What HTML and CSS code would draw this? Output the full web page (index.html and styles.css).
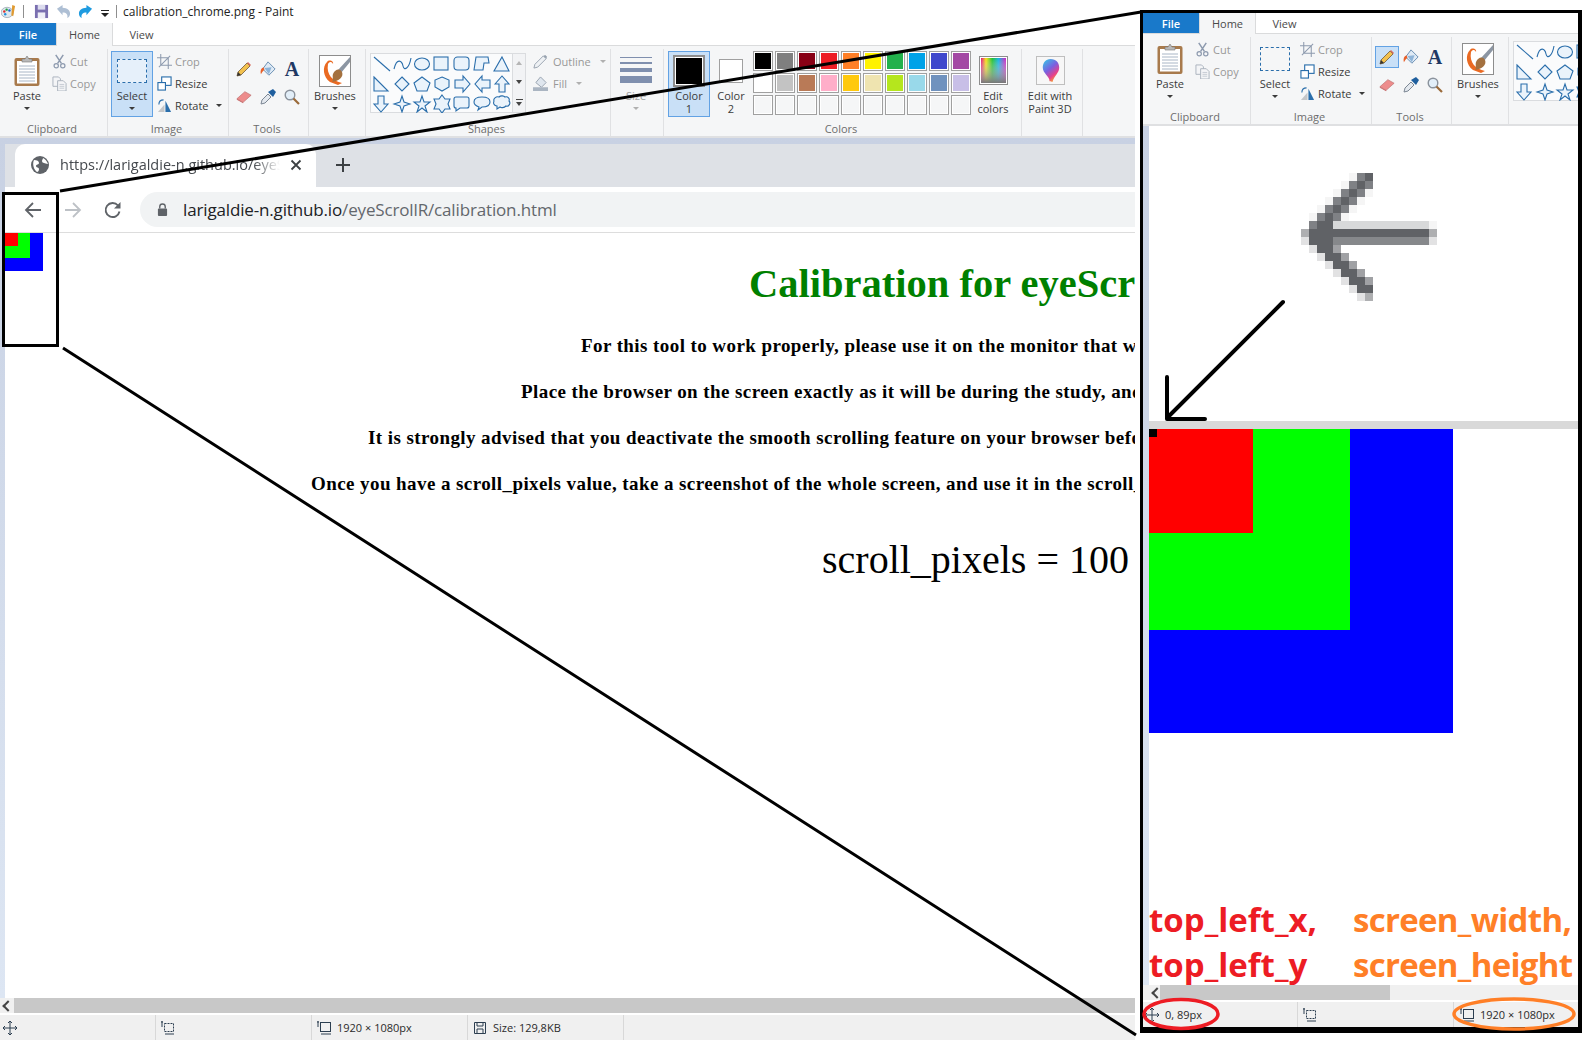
FILE: index.html
```html
<!DOCTYPE html>
<html lang="en">
<head>
    <meta charset="UTF-8">
    <title>calibration_chrome.png - Paint</title>
    <link rel="stylesheet" href="styles.css">
</head>
<body>
    <!-- shared icons -->
    <svg class="sprite" width="0" height="0">
        <defs>
            <linearGradient id="rainbow" x1="0" x2="1" y1="0" y2="0">
                <stop offset="0" stop-color="#e0107a"/><stop offset="0.2" stop-color="#f6e012"/><stop offset="0.45" stop-color="#20c030"/><stop offset="0.7" stop-color="#10b0e0"/><stop offset="1" stop-color="#d020c0"/>
            </linearGradient>
            <linearGradient id="fadeGray" x1="0" x2="0" y1="0" y2="1">
                <stop offset="0" stop-color="#fff" stop-opacity="0"/><stop offset="1" stop-color="#777"/>
            </linearGradient>
            <linearGradient id="balloon" x1="0" x2="0.6" y1="0" y2="1">
                <stop offset="0" stop-color="#2fd0e8"/><stop offset="0.5" stop-color="#7a60e0"/><stop offset="0.8" stop-color="#e8408a"/><stop offset="1" stop-color="#f8a030"/>
            </linearGradient>
        </defs>
        <symbol id="i-paste" viewBox="0 0 26 30">
            <rect x="0.5" y="2" width="25" height="28" rx="2" fill="#a87a4c"/>
            <rect x="3" y="5" width="20" height="22.500" fill="#fff"/>
            <path d="M5 10h16M5 13h16M5 16h16M5 19h16M5 22h16M5 25h16" stroke="#a9b6c6"/>
            <path d="M8 6V3h3l2-3 2 3h3v3z" fill="#b9b9b9" stroke="#777" stroke-width="0.6"/>
        </symbol>
        <symbol id="i-cut" viewBox="0 0 14 16">
            <path d="M3 1l6 9M11 1L5 10" stroke="#8d9aae" stroke-width="1.600" fill="none"/>
            <circle cx="3.500" cy="12.500" r="2.300" fill="none" stroke="#8d9aae" stroke-width="1.300"/>
            <circle cx="10.500" cy="12.500" r="2.300" fill="none" stroke="#8d9aae" stroke-width="1.300"/>
        </symbol>
        <symbol id="i-copy" viewBox="0 0 16 16">
            <path d="M1 1h6l2 2v8H1z" fill="#f4f5f7" stroke="#aab2bd"/>
            <path d="M6 5h6l3 3v8H6z" fill="#f4f5f7" stroke="#aab2bd"/>
            <path d="M8 9h5M8 11h5M8 13h5" stroke="#c3cad2"/>
        </symbol>
        <symbol id="i-crop" viewBox="0 0 16 16">
            <path d="M4 0v12h12M0 4h12v12M2 14L14 2" fill="none" stroke="#8d9aae" stroke-width="1.100"/>
        </symbol>
        <symbol id="i-resize" viewBox="0 0 16 16">
            <rect x="5" y="1" width="10" height="9" fill="#fff" stroke="#2a6eab" stroke-width="1.200"/>
            <rect x="1" y="7" width="8" height="8" fill="#fff" stroke="#2a6eab" stroke-width="1.200"/>
        </symbol>
        <symbol id="i-rotate" viewBox="0 0 16 16">
            <path d="M1 15L8 7v8z" fill="#c4c6c9"/>
            <path d="M9 3l6 12H9z" fill="#2a6eab"/>
            <path d="M2 7C2 4 4 2 7 2" fill="none" stroke="#2a6eab" stroke-width="1.200"/>
        </symbol>
        <symbol id="i-pencil" viewBox="0 0 16 16">
            <path d="M1 15l1-4 9-9 3 3-9 9z" fill="#f2c14e" stroke="#70583a" stroke-width="0.800"/>
            <path d="M1 15l1-4 3 3z" fill="#333"/>
            <path d="M11 2l3 3 1-1-3-3z" fill="#d86a5a"/>
        </symbol>
        <symbol id="i-fill" viewBox="0 0 18 18">
            <path d="M9 1l8 8-7 7-7-7z" fill="#dfeaf5" stroke="#5c85ad"/>
            <path d="M5 8l8-1-3 8z" fill="#8eb4d8"/>
            <path d="M4 7C1 8 0 11 1 15c1-2 2-4 4-5z" fill="#e8602a"/>
        </symbol>
        <symbol id="i-eraser" viewBox="0 0 18 16">
            <path d="M1 10l9-8 7 4-9 8z" fill="#ed8c8c" stroke="#b86a6a" stroke-width="0.700"/>
            <path d="M1 10l7 4v1l-7-4z" fill="#c96a6a"/>
        </symbol>
        <symbol id="i-picker" viewBox="0 0 16 16">
            <path d="M1 15l1-4 6-6 3 3-6 6z" fill="#e3e8ee" stroke="#7c8794"/>
            <path d="M8 3l5-3 3 3-3 5z" fill="#1f5f9e"/>
        </symbol>
        <symbol id="i-zoom" viewBox="0 0 16 16">
            <circle cx="6" cy="6" r="4.800" fill="#e2eef8" stroke="#8a929c" stroke-width="1.400"/>
            <path d="M9.500 9.500L15 15" stroke="#9a6a3a" stroke-width="2.200"/>
        </symbol>
        <symbol id="i-brushes" viewBox="0 0 32 32">
            <rect x="0.500" y="0.500" width="31" height="31" fill="#fff" stroke="#8d8d8d"/>
            <path d="M31 2L19 15l3 3 9-11z" fill="#8c96a3"/>
            <path d="M8 7C3 12 4 22 11 27l8 3 4-2C14 26 7 20 9 9c2-3 4-2 5 0 1-3-4-5-6-2z" fill="#ea6a22"/>
            <path d="M14 19c2-5 7-6 9-2 2 5-3 9-10 10 2-2 0-5 1-8z" fill="#a4713f"/>
        </symbol>
        <symbol id="i-outline" viewBox="0 0 16 16">
            <path d="M1 15l1-4 9-9 3 3-9 9z" fill="#eef1f4" stroke="#96a1ae"/>
            <path d="M11 2l3 3 1-2-2-2z" fill="#96a1ae"/>
        </symbol>
        <symbol id="i-fillshape" viewBox="0 0 16 16">
            <path d="M8 1l6 6-5 5-6-5z" fill="#dfe6ee" stroke="#96a1ae"/>
            <rect x="0" y="12" width="16" height="4" fill="#aab5c2"/>
        </symbol>
        <symbol id="i-shapes" viewBox="0 0 142 59">
            <g fill="#eaf3fb" stroke="#2a6eab" stroke-width="1.100">
                <path d="M3 3l16 14" fill="none"/>
                <path d="M23 15c3-12 8-8 9-3s6 3 8-8" fill="none"/>
                <ellipse cx="51" cy="10" rx="7.500" ry="6"/>
                <rect x="63" y="3" width="14" height="13"/>
                <rect x="83" y="3" width="15" height="13" rx="3.500"/>
                <path d="M103 16l2-13h12l1 6h-5l-1 7z"/>
                <path d="M131 3l7 14h-15z"/>
                <path d="M3 23l14 14H3z"/>
                <path d="M31 23l7 7-7 7-7-7z"/>
                <path d="M51 23l8 6-3 8H46l-3-8z"/>
                <path d="M71 23l7 3v7l-7 4-7-4v-7z"/>
                <path d="M84 26h8v-4l7 8-7 8v-4h-8z"/>
                <path d="M119 26h-8v-4l-7 8 7 8v-4h8z"/>
                <path d="M124 30l7-8 7 8h-4v8h-6v-8z"/>
                <path d="M7 42h6v8h4l-7 8-7-8h4z"/>
                <path d="M31 42l2 6 6 2-6 2-2 6-2-6-6-2 6-2z"/>
                <path d="M51 42l2 6h6l-5 4 2 6-5-4-5 4 2-6-5-4h6z"/>
                <path d="M71 41l3 4h5l-2 5 2 5h-5l-3 4-3-4h-5l2-5-2-5h5z"/>
                <path d="M85 43h11a2 2 0 012 2v7a2 2 0 01-2 2h-7l-4 3v-3a2 2 0 01-2-2v-7a2 2 0 012-2z"/>
                <path d="M111 43c5 0 8 2 8 5s-3 5-8 5l-4 3 1-3c-3-1-5-3-5-5 0-3 3-5 8-5z"/>
                <path d="M128 43c2-2 5-1 6 0 3-1 5 2 4 4 2 2 0 6-3 5-2 2-5 2-6 1l-3 2v-3c-3 0-4-3-3-5-1-2 2-5 5-4z"/>
            </g>
        </symbol>
        <symbol id="i-rainbow" viewBox="0 0 29 29">
            <rect x="0.500" y="0.500" width="28" height="28" fill="#fff" stroke="#8d8d8d"/>
            <rect x="2" y="2" width="25" height="25" fill="url(#rainbow)"/>
            <rect x="2" y="2" width="25" height="25" fill="url(#fadeGray)"/>
        </symbol>
        <symbol id="i-paint3d" viewBox="0 0 30 30">
            <rect x="0.500" y="0.500" width="29" height="29" fill="#f7f7f7" stroke="#bdbdbd"/>
            <path d="M15 3c6 0 9 4 9 9 0 6-5 8-7 15l-2-1-1 0c0-5-7-8-7-14 0-5 3-9 8-9z" fill="url(#balloon)"/>
        </symbol>
        <symbol id="i-move" viewBox="0 0 14 14">
            <path d="M7 0v14M0 7h14M5 2l2-2 2 2M5 12l2 2 2-2M2 5L0 7l2 2M12 5l2 2-2 2" fill="none" stroke="#2c3e50"/>
        </symbol>
        <symbol id="i-selbox" viewBox="0 0 14 14">
            <rect x="3.500" y="2.500" width="9" height="8" fill="none" stroke="#2c3e50" stroke-dasharray="2 1"/>
            <path d="M1 6V0M0 1h2M4 13h9" fill="none" stroke="#2c3e50"/>
        </symbol>
        <symbol id="i-canvas" viewBox="0 0 14 14">
            <rect x="3.500" y="1.500" width="10" height="9" fill="none" stroke="#2c3e50"/>
            <path d="M1 6V0M0 1h2M4 13h10" fill="none" stroke="#2c3e50"/>
        </symbol>
        <symbol id="i-disk" viewBox="0 0 14 14">
            <path d="M1.500 1.500h11v11h-11z" fill="none" stroke="#2c3e50"/>
            <path d="M4 2v3h6V2M4 12V8h6v4" fill="none" stroke="#2c3e50"/>
        </symbol>
    </svg>

    <div class="paint-window">
        <div class="titlebar">
            <svg class="qa-icon app-icon" viewBox="0 0 16 16">
                <ellipse cx="6.500" cy="9" rx="6.500" ry="5.500" fill="#dfe8ef" stroke="#7a8a99" stroke-width="0.600"/>
                <circle cx="3.500" cy="8" r="1.300" fill="#e03030"/><circle cx="6" cy="6" r="1.300" fill="#20a040"/><circle cx="9" cy="7" r="1.300" fill="#2060d0"/><circle cx="4.500" cy="11" r="1.300" fill="#2090e0"/>
                <path d="M12 1l3 1-2 11-2-1z" fill="#e09a30"/>
            </svg>
            <span class="qa-sep"></span>
            <svg class="qa-icon save-icon" viewBox="0 0 16 16">
                <path d="M1 1h14v14H1z" fill="#7a6fb0"/><rect x="4" y="1" width="8" height="5" fill="#dcdcee"/><rect x="4" y="9" width="8" height="6" fill="#efeff7"/>
            </svg>
            <svg class="qa-icon undo-icon" viewBox="0 0 16 16">
                <path d="M1 5l6-4v3c5 0 8 3 8 6 0 2-1 4-3 5 1-4-1-6-5-6v3z" fill="#aebfd4"/>
            </svg>
            <svg class="qa-icon redo-icon" viewBox="0 0 16 16">
                <path d="M15 5L9 1v3C4 4 1 7 1 10c0 2 1 4 3 5-1-4 1-6 5-6v3z" fill="#1e9be0"/>
            </svg>
            <span class="qa-more"></span>
            <span class="qa-sep"></span>
            <span class="title-text">calibration_chrome.png - Paint</span>
        </div>

        <div class="tabs">
            <span class="tab tab-file">File</span>
            <span class="tab tab-home">Home</span>
            <span class="tab">View</span>
        </div>

        <div class="ribbon">
            <div class="group g-clipboard">
                <div class="group-body">
                    <div class="big-btn btn-paste">
                        <div class="big-icon"><svg class="icon-paste"><use href="#i-paste"/></svg></div>
                        <span>Paste</span><i class="caret"></i>
                    </div>
                    <div class="small-list clip-list">
                        <div class="small-item off"><svg><use href="#i-cut"/></svg>Cut</div>
                        <div class="small-item off"><svg><use href="#i-copy"/></svg>Copy</div>
                    </div>
                </div>
                <div class="group-label">Clipboard</div>
            </div>
            <div class="group g-image">
                <div class="group-body">
                    <div class="big-btn btn-select active">
                        <div class="big-icon"><span class="select-box"></span></div>
                        <span>Select</span><i class="caret"></i>
                    </div>
                    <div class="small-list">
                        <div class="small-item off"><svg><use href="#i-crop"/></svg>Crop</div>
                        <div class="small-item"><svg><use href="#i-resize"/></svg>Resize</div>
                        <div class="small-item"><svg><use href="#i-rotate"/></svg>Rotate<i class="caret caret-inline"></i></div>
                    </div>
                </div>
                <div class="group-label">Image</div>
            </div>
            <div class="group g-tools">
                <div class="group-body">
                    <div class="tools-grid">
                        <span class="tool"><svg><use href="#i-pencil"/></svg></span>
                        <span class="tool"><svg><use href="#i-fill"/></svg></span>
                        <span class="tool tool-text">A</span>
                        <span class="tool"><svg><use href="#i-eraser"/></svg></span>
                        <span class="tool"><svg><use href="#i-picker"/></svg></span>
                        <span class="tool"><svg><use href="#i-zoom"/></svg></span>
                    </div>
                </div>
                <div class="group-label">Tools</div>
            </div>
            <div class="group g-brushes">
                <div class="group-body">
                    <div class="big-btn btn-brushes">
                        <div class="big-icon"><svg class="icon-32"><use href="#i-brushes"/></svg></div>
                        <span>Brushes</span><i class="caret"></i>
                    </div>
                </div>
                <div class="group-label">&nbsp;</div>
            </div>
            <div class="group g-shapes">
                <div class="group-body">
                    <div class="gallery"><svg class="gallery-art"><use href="#i-shapes"/></svg></div>
                    <div class="gallery-scroll"><i class="scroll-up"></i><i class="scroll-down"></i><i class="scroll-more"></i></div>
                    <div class="small-list shape-list">
                        <div class="small-item off"><svg><use href="#i-outline"/></svg>Outline<i class="caret caret-inline"></i></div>
                        <div class="small-item off"><svg><use href="#i-fillshape"/></svg>Fill<i class="caret caret-inline"></i></div>
                    </div>
                </div>
                <div class="group-label">Shapes</div>
            </div>
            <div class="group g-size">
                <div class="group-body">
                    <div class="big-btn btn-size off">
                        <div class="big-icon size-lines"><i class="w1"></i><i class="w2"></i><i class="w3"></i><i class="w4"></i></div>
                        <span>Size</span><i class="caret"></i>
                    </div>
                </div>
                <div class="group-label">&nbsp;</div>
            </div>
            <div class="group g-colors">
                <div class="group-body">
                    <div class="big-btn btn-color active">
                        <div class="big-icon"><span class="color-box box-one"></span></div>
                        <span class="two-line">Color<br>1</span>
                    </div>
                    <div class="big-btn btn-color">
                        <div class="big-icon"><span class="color-box box-two"></span></div>
                        <span class="two-line">Color<br>2</span>
                    </div>
                    <div class="palette">
                        <i class="c1"></i><i class="c2"></i><i class="c3"></i><i class="c4"></i><i class="c5"></i><i class="c6"></i><i class="c7"></i><i class="c8"></i><i class="c9"></i><i class="c10"></i>
                        <i class="c11"></i><i class="c12"></i><i class="c13"></i><i class="c14"></i><i class="c15"></i><i class="c16"></i><i class="c17"></i><i class="c18"></i><i class="c19"></i><i class="c20"></i>
                        <i></i><i></i><i></i><i></i><i></i><i></i><i></i><i></i><i></i><i></i>
                    </div>
                    <div class="big-btn btn-edit">
                        <div class="big-icon"><svg class="icon-29"><use href="#i-rainbow"/></svg></div>
                        <span class="two-line">Edit<br>colors</span>
                    </div>
                </div>
                <div class="group-label">Colors</div>
            </div>
            <div class="group g-3d">
                <div class="group-body">
                    <div class="big-btn btn-3d">
                        <div class="big-icon"><svg class="icon-29"><use href="#i-paint3d"/></svg></div>
                        <span class="two-line">Edit with<br>Paint 3D</span>
                    </div>
                </div>
                <div class="group-label">&nbsp;</div>
            </div>
        </div>

        <div class="canvas-area">
            <div class="chrome-tabs">
                <div class="chrome-tab">
                    <svg class="globe" viewBox="0 0 18 18">
                        <circle cx="9" cy="9" r="9" fill="#5f6368"/>
                        <path d="M3 4c3 0 5 1 5 3s-3 1-3 3 3 1 3 3-1 3-2 3C3 14 1 8 3 4zM12 2c2 1 4 3 5 6-2 0-3-1-4-1s-2-1-2-2 1-2 1-3z" fill="#fff"/>
                    </svg>
                    <span class="chrome-tab-title">https://larigaldie-n.github.io/eyeScrollR/calibration.html</span>
                    <svg class="tab-close" viewBox="0 0 12 12"><path d="M1.500 1.500l9 9M10.500 1.500l-9 9" stroke="#3c4043" stroke-width="1.800"/></svg>
                </div>
                <svg class="tab-plus" viewBox="0 0 14 14"><path d="M7 0v14M0 7h14" stroke="#3c4043" stroke-width="2"/></svg>
            </div>
            <div class="chrome-toolbar">
                <svg class="nav-icon" viewBox="0 0 18 18"><path d="M17 9H2M9 2L2 9l7 7" fill="none" stroke="#5f6368" stroke-width="1.800"/></svg>
                <svg class="nav-icon" viewBox="0 0 18 18"><path d="M1 9h15M9 2l7 7-7 7" fill="none" stroke="#bdc1c6" stroke-width="1.800"/></svg>
                <svg class="nav-icon" viewBox="0 0 18 18"><path d="M15.500 10.500A7 7 0 1 1 14 4.500" fill="none" stroke="#5f6368" stroke-width="1.900"/><path d="M16.500 1v6.500H10z" fill="#5f6368"/></svg>
                <div class="url-pill">
                    <svg class="lock" viewBox="0 0 12 14"><path d="M3 6V4a3 3 0 016 0v2" fill="none" stroke="#5f6368" stroke-width="1.500"/><rect x="1" y="6" width="10" height="8" rx="1" fill="#5f6368"/></svg>
                    <span class="url"><b>larigaldie-n.github.io</b>/eyeScrollR/calibration.html</span>
                </div>
            </div>
            <div class="web-page">
                <div class="squares">
                    <div class="sq-blue"><div class="sq-green"><div class="sq-red"></div></div></div>
                </div>
                <h1 class="cal-title">Calibration for eyeScrollR</h1>
                <p class="cal-line line-a">For this tool to work properly, please use it on the monitor that will be used</p>
                <p class="cal-line line-b">Place the browser on the screen exactly as it will be during the study, and scroll</p>
                <p class="cal-line line-c">It is strongly advised that you deactivate the smooth scrolling feature on your browser before</p>
                <p class="cal-line line-d">Once you have a scroll_pixels value, take a screenshot of the whole screen, and use it in the scroll_</p>
                <p class="cal-value">scroll_pixels = 100</p>
            </div>
        </div>

        <div class="hscroll"><i class="hscroll-left"></i><span class="hscroll-thumb"></span></div>
        <div class="statusbar">
            <span class="status-cell cell-a"><svg><use href="#i-move"/></svg></span>
            <span class="status-cell cell-b"><svg><use href="#i-selbox"/></svg></span>
            <span class="status-cell cell-b"><svg><use href="#i-canvas"/></svg>1920 × 1080px</span>
            <span class="status-cell cell-b"><svg><use href="#i-disk"/></svg>Size: 129,8KB</span>
        </div>
    </div>

    <!-- zoomed copy on the right -->
    <div class="zoom-frame">
        <div class="tabs tabs-short">
            <span class="tab tab-file">File</span>
            <span class="tab tab-home">Home</span>
            <span class="tab">View</span>
        </div>
        <div class="ribbon">
            <div class="group g-clipboard">
                <div class="group-body">
                    <div class="big-btn btn-paste">
                        <div class="big-icon"><svg class="icon-paste"><use href="#i-paste"/></svg></div>
                        <span>Paste</span><i class="caret"></i>
                    </div>
                    <div class="small-list clip-list">
                        <div class="small-item off"><svg><use href="#i-cut"/></svg>Cut</div>
                        <div class="small-item off"><svg><use href="#i-copy"/></svg>Copy</div>
                    </div>
                </div>
                <div class="group-label">Clipboard</div>
            </div>
            <div class="group g-image">
                <div class="group-body">
                    <div class="big-btn btn-select">
                        <div class="big-icon"><span class="select-box"></span></div>
                        <span>Select</span><i class="caret"></i>
                    </div>
                    <div class="small-list">
                        <div class="small-item off"><svg><use href="#i-crop"/></svg>Crop</div>
                        <div class="small-item"><svg><use href="#i-resize"/></svg>Resize</div>
                        <div class="small-item"><svg><use href="#i-rotate"/></svg>Rotate<i class="caret caret-inline"></i></div>
                    </div>
                </div>
                <div class="group-label">Image</div>
            </div>
            <div class="group g-tools">
                <div class="group-body">
                    <div class="tools-grid">
                        <span class="tool tool-on"><svg><use href="#i-pencil"/></svg></span>
                        <span class="tool"><svg><use href="#i-fill"/></svg></span>
                        <span class="tool tool-text">A</span>
                        <span class="tool"><svg><use href="#i-eraser"/></svg></span>
                        <span class="tool"><svg><use href="#i-picker"/></svg></span>
                        <span class="tool"><svg><use href="#i-zoom"/></svg></span>
                    </div>
                </div>
                <div class="group-label">Tools</div>
            </div>
            <div class="group g-brushes">
                <div class="group-body">
                    <div class="big-btn btn-brushes">
                        <div class="big-icon"><svg class="icon-32"><use href="#i-brushes"/></svg></div>
                        <span>Brushes</span><i class="caret"></i>
                    </div>
                </div>
                <div class="group-label">&nbsp;</div>
            </div>
            <div class="group g-shapes">
                <div class="group-body">
                    <div class="gallery"><svg class="gallery-art"><use href="#i-shapes"/></svg></div>
                </div>
            </div>
        </div>
        <div class="zoom-canvas">
            <div class="zoom-toolbar">
                <!-- back arrow blown up pixel by pixel -->
                <svg class="pixel-arrow" viewBox="0 0 17 16" shape-rendering="crispEdges">
                    <path fill="#f5f5f5" d="M6 0h1v1H6zM5 1h1v1H5zM4 2h1v1H4zM8 2h1v1H8zM3 3h1v1H3zM7 3h1v1H7zM2 4h1v1H2zM6 4h1v1H6zM1 5h1v1H1zM5 5h1v1H5zM16 6h1v1h-1z"/>
                    <path fill="#7f8185" d="M7 0h1v1H7zM6 1h1v1H6zM8 1h1v1H8zM5 2h1v1H5zM7 2h1v1H7zM4 3h1v1H4zM6 3h1v1H6zM3 4h1v1H3zM5 4h1v1H5zM2 5h1v1H2zM4 5h1v1H4zM1 6h1v1H1z"/>
                    <path fill="#606266" d="M8 0h1v1H8zM7 1h1v1H7zM6 2h1v1H6zM5 3h1v1H5zM4 4h1v1H4zM3 5h1v1H3zM2 6h2v1H2zM1 7h15v1H1zM1 8h3v1H1zM2 9h2v1H2zM3 10h2v1H3zM4 11h2v1H4zM5 12h2v1H5zM6 13h2v1H6zM7 14h2v1H7z"/>
                    <path fill="#d8d9da" d="M4 6h12v1H4z"/>
                    <path fill="#aeafb1" d="M0 7h1v1H0zM16 7h1v1h-1zM8 15h1v1H8z"/>
                    <path fill="#86888b" d="M4 8h12v1H4z"/>
                    <path fill="#e2e2e3" d="M0 8h1v1H0zM16 8h1v1h-1zM1 9h1v1H1zM2 10h1v1H2zM3 11h1v1H3zM4 12h1v1H4zM5 13h1v1H5zM6 14h1v1H6zM7 15h1v1H7z"/>
                    <path fill="#a0a1a4" d="M4 9h1v1H4zM5 10h1v1H5zM6 11h1v1H6zM7 12h1v1H7zM8 13h1v1H8z"/>
                </svg>
            </div>
            <div class="zoom-strip"></div>
            <div class="zoom-page">
                <div class="sq-blue big"><div class="sq-green"><div class="sq-red"><span class="pixel-mark"></span></div></div></div>
                <div class="coord-labels">
                    <span class="lbl-red">top_left_x,</span><span class="lbl-orange">screen_width,</span>
                    <span class="lbl-red">top_left_y</span><span class="lbl-orange">screen_height</span>
                </div>
            </div>
        </div>
        <div class="hscroll zoom-scroll"><i class="hscroll-left"></i><span class="hscroll-thumb"></span></div>
        <div class="statusbar">
            <span class="status-cell cell-z1"><svg><use href="#i-move"/></svg>0, 89px</span>
            <span class="status-cell cell-z2"><svg><use href="#i-selbox"/></svg></span>
            <span class="status-cell cell-z3"><svg><use href="#i-canvas"/></svg>1920 × 1080px</span>
        </div>
    </div>

    <!-- callout lines and circled values drawn on top -->
    <div class="zoom-source"></div>
    <svg class="annotations" viewBox="0 0 1582 1040">
        <path d="M60 191L1141 12M63 348L1136 1035" stroke="#000" stroke-width="3" fill="none"/>
        <path d="M1283 302L1168 417M1167 377V419H1205" stroke="#000" stroke-width="4" fill="none" stroke-linecap="round" stroke-linejoin="round"/>
        <ellipse cx="1181" cy="1014" rx="37" ry="14.500" fill="none" stroke="#ed1c24" stroke-width="3.500"/>
        <ellipse cx="1514" cy="1014" rx="60" ry="15" fill="none" stroke="#ff7f27" stroke-width="3.500"/>
    </svg>
</body>
</html>
```

FILE: styles.css
```css
* {
    box-sizing: border-box;
}

body {
    margin: 0;
    width: 1582px;
    height: 1040px;
    overflow: hidden;
    position: relative;
    display: flex;
    align-items: flex-start;
    background-color: #ffffff;
    font-family: "Open Sans", "Noto Sans", sans-serif;
    font-size: 11px;
    color: #3b3b3b;
}

.sprite {
    position: absolute;
}

svg {
    display: block;
}

i {
    display: block;
}

/* window */

.paint-window {
    width: 1135px;
    height: 1040px;
    flex-shrink: 0;
    display: flex;
    flex-direction: column;
    overflow: hidden;
}

.titlebar {
    height: 23px;
    display: flex;
    align-items: center;
    padding-left: 1px;
    flex-shrink: 0;
}

.qa-icon {
    width: 15px;
    height: 15px;
    margin-right: 7px;
}

.qa-sep {
    width: 1px;
    height: 13px;
    background-color: #8f8f8f;
    margin-right: 10px;
}

.app-icon {
    margin-right: 7px;
}

.qa-more {
    width: 8px;
    height: 6px;
    margin: 2px 7px 0 1px;
    border-top: 1px solid #222;
    position: relative;
}

.qa-more::after {
    content: "";
    position: absolute;
    left: 0;
    top: 2px;
    border: 4px solid transparent;
    border-top: 4px solid #222;
    border-bottom: 0;
}

.title-text {
    font-size: 12px;
    margin-left: -4px;
    color: #222;
}

.tabs {
    height: 23px;
    display: flex;
    flex-shrink: 0;
    background-color: #ffffff;
    border-bottom: 1px solid #dadbdc;
}

.tabs-short {
    height: 21px;
}

.tab {
    width: 57px;
    display: flex;
    align-items: center;
    justify-content: center;
    font-size: 11px;
    color: #4a4a4a;
}

.tab-file {
    width: 56px;
    background-color: #1979ca;
    color: #ffffff;
    font-weight: 600;
}

.tab-home {
    background-color: #f5f6f7;
    border: 1px solid #dadbdc;
    border-bottom: 0;
    border-top: 0;
    margin-bottom: -1px;
}

/* ribbon */

.ribbon {
    height: 92px;
    display: flex;
    flex-shrink: 0;
    padding: 3px 0 0;
    background-color: #f5f6f7;
    border-bottom: 2px solid #dfe0e2;
    overflow: hidden;
}

.group {
    display: flex;
    flex-direction: column;
    flex-shrink: 0;
    border-right: 1px solid #e0e1e3;
}

.group-body {
    height: 72px;
    display: flex;
}

.group-label {
    padding-right: 3px;
    text-align: center;
    line-height: 15px;
    font-size: 11px;
    color: #6d6d6d;
}

.g-clipboard { width: 108px; }
.g-image { width: 121px; }
.g-tools { width: 80px; }
.g-brushes { width: 57px; }
.g-shapes { width: 245px; }
.g-size { width: 53px; }
.g-colors { width: 358px; }
.g-3d { width: 61px; }

.big-btn {
    height: 66px;
    margin-top: 2px;
    display: flex;
    flex-direction: column;
    align-items: center;
    border: 1px solid transparent;
    text-align: center;
    line-height: 13px;
    flex-shrink: 0;
}

.big-btn.active {
    background-color: #c9e0f7;
    border-color: #62a2e4;
}

.big-btn.off {
    color: #a0a0a0;
}

.big-icon {
    height: 37px;
    display: flex;
    align-items: center;
    justify-content: center;
    flex-shrink: 0;
}

.two-line {
    display: block;
}

.caret {
    width: 0;
    height: 0;
    margin-top: 5px;
    border: 3px solid transparent;
    border-top: 3px solid #3b3b3b;
    border-bottom: 0;
}

.caret-inline {
    margin: 0 0 0 4px;
}

.btn-paste {
    width: 50px;
    margin-left: 2px;
}

.icon-paste {
    width: 26px;
    height: 30px;
}

.icon-32 {
    width: 32px;
    height: 32px;
}

.icon-29 {
    width: 29px;
    height: 29px;
}

.btn-select {
    width: 42px;
    margin-left: 3px;
}

.select-box {
    width: 30px;
    height: 24px;
    background-color: #e6f0fa;
    border: 1px dashed #2a6eab;
}

.btn-select:not(.active) .select-box {
    background-color: transparent;
}

.small-list {
    display: flex;
    flex-direction: column;
    padding-top: 1px;
    margin-left: 4px;
}

.clip-list {
    margin-left: 0;
}

.small-item {
    height: 22px;
    display: flex;
    align-items: center;
    gap: 3px;
    white-space: nowrap;
}

.small-item svg {
    width: 15px;
    height: 15px;
}

.small-item.off {
    color: #989898;
}

.small-item.off .caret {
    border-top-color: #b0b0b0;
}

.tools-grid {
    display: grid;
    grid-template-columns: repeat(3, 24px);
    grid-auto-rows: 22px;
    row-gap: 6px;
    margin: 9px 0 0 3px;
}

.tool {
    display: flex;
    align-items: center;
    justify-content: center;
    border: 1px solid transparent;
}

.tool svg {
    width: 16px;
    height: 16px;
}

.tool-on {
    background-color: #c9e0f7;
    border-color: #62a2e4;
}

.tool-text {
    font-family: "Liberation Serif", serif;
    font-weight: bold;
    font-size: 20px;
    color: #1f3864;
}

.btn-brushes {
    width: 52px;
}

.gallery {
    width: 143px;
    height: 60px;
    margin: 4px 0 0 4px;
    background-color: #fafbfc;
    border: 1px solid #dadcdf;
    flex-shrink: 0;
}

.gallery-art {
    width: 142px;
    height: 59px;
}

.gallery-scroll {
    width: 13px;
    height: 60px;
    margin-top: 4px;
    display: flex;
    flex-direction: column;
    align-items: center;
    justify-content: space-around;
    background-color: #f2f3f5;
    border: 1px solid #dadcdf;
    border-left: 0;
}

.scroll-up {
    border: 3px solid transparent;
    border-bottom: 4px solid #b5b5b5;
    border-top: 0;
}

.scroll-down {
    border: 3px solid transparent;
    border-top: 4px solid #444;
    border-bottom: 0;
}

.scroll-more {
    width: 7px;
    height: 6px;
    border-top: 1px solid #444;
    position: relative;
}

.scroll-more::after {
    content: "";
    position: absolute;
    left: 0;
    top: 2px;
    border: 3.5px solid transparent;
    border-top: 4px solid #444;
    border-bottom: 0;
}

.shape-list {
    margin-left: 7px;
}

.shape-list .small-item {
    gap: 5px;
}

.btn-size {
    width: 50px;
}

.btn-size .caret {
    border-top-color: #b0b0b0;
}

.size-lines {
    width: 32px;
    flex-direction: column;
    justify-content: flex-start;
    gap: 4px;
    padding-top: 5px;
}

.size-lines i {
    width: 32px;
    background-color: #7f8fae;
}

.w1 { height: 1px; }
.w2 { height: 2px; }
.w3 { height: 4px; }
.w4 { height: 7px; }

.btn-color {
    width: 42px;
}

.btn-color.active {
    margin-left: 4px;
}

.color-box {
    display: block;
}

.box-one {
    width: 32px;
    height: 32px;
    background-color: #000000;
    border: 2px solid #8d8d8d;
    outline: 1px solid #ffffff;
    outline-offset: -3px;
}

.box-two {
    width: 24px;
    height: 24px;
    background-color: #ffffff;
    border: 1px solid #a0a0a0;
}

.palette {
    display: grid;
    grid-template-columns: repeat(10, 20px);
    grid-auto-rows: 20px;
    gap: 2px;
    margin: 2px 0 0 1px;
    flex-shrink: 0;
}

.palette i {
    border: 1px solid #a0a0a0;
    outline: 1px solid #ffffff;
    outline-offset: -2px;
    background-color: #f5f6f7;
}

.palette i[class] {
    background-color: var(--swatch);
}

.c1 { --swatch: #000000; }
.c2 { --swatch: #7f7f7f; }
.c3 { --swatch: #880015; }
.c4 { --swatch: #ed1c24; }
.c5 { --swatch: #ff7f27; }
.c6 { --swatch: #fff200; }
.c7 { --swatch: #22b14c; }
.c8 { --swatch: #00a2e8; }
.c9 { --swatch: #3f48cc; }
.c10 { --swatch: #a349a4; }
.c11 { --swatch: #ffffff; }
.c12 { --swatch: #c3c3c3; }
.c13 { --swatch: #b97a57; }
.c14 { --swatch: #ffaec9; }
.c15 { --swatch: #ffc90e; }
.c16 { --swatch: #efe4b0; }
.c17 { --swatch: #b5e61d; }
.c18 { --swatch: #99d9ea; }
.c19 { --swatch: #7092be; }
.c20 { --swatch: #c8bfe7; }

.btn-edit {
    width: 38px;
    margin-left: 3px;
}

.btn-3d {
    width: 56px;
    white-space: nowrap;
}

/* canvas with the browser inside */

.canvas-area {
    flex: 1;
    min-height: 0;
    padding-left: 5px;
    background: linear-gradient(#c8d1e3, #dde6f3);
    padding-top: 6px;
    display: flex;
    flex-direction: column;
    overflow: hidden;
}

.chrome-tabs {
    height: 43px;
    flex-shrink: 0;
    display: flex;
    align-items: flex-start;
    padding: 0 0 0 10px;
    background-color: #dee1e6;
}

.chrome-tab {
    width: 301px;
    height: 43px;
    display: flex;
    align-items: center;
    padding: 0 11px 2px 16px;
    background-color: #ffffff;
    border-radius: 10px 10px 0 0;
}

.globe {
    width: 18px;
    height: 18px;
    flex-shrink: 0;
}

.chrome-tab-title {
    width: 220px;
    margin-left: 11px;
    overflow: hidden;
    white-space: nowrap;
    font-size: 14.500px;
    color: #45494e;
    -webkit-mask-image: linear-gradient(90deg, #000 88%, transparent);
    mask-image: linear-gradient(90deg, #000 88%, transparent);
}

.tab-close {
    width: 12px;
    height: 12px;
    margin-left: 10px;
    flex-shrink: 0;
}

.tab-plus {
    width: 14px;
    height: 14px;
    margin: 14px 0 0 20px;
}

.chrome-toolbar {
    height: 46px;
    flex-shrink: 0;
    display: flex;
    align-items: center;
    padding-left: 19px;
    background-color: #ffffff;
    border-bottom: 1px solid #dddddd;
}

.nav-icon {
    width: 18px;
    height: 18px;
    margin-right: 22px;
    flex-shrink: 0;
}

.url-pill {
    height: 35px;
    flex: 1;
    margin-left: -4px;
    display: flex;
    align-items: center;
    padding-left: 17px;
    background-color: #f1f3f4;
    border-radius: 18px 0 0 18px;
}

.lock {
    width: 11px;
    height: 13px;
}

.url {
    margin-left: 15px;
    font-size: 17px;
    letter-spacing: -0.150px;
    color: #63676c;
    white-space: nowrap;
}

.url b {
    font-weight: 400;
    color: #202124;
}

.web-page {
    flex: 1;
    background-color: #ffffff;
    font-family: "Liberation Serif", serif;
    color: #000000;
    overflow: hidden;
}

.squares {
    height: 38px;
}

.sq-blue {
    width: 38px;
    height: 38px;
    background-color: #0000ff;
}

.sq-green {
    width: 66%;
    height: 66%;
    background-color: #00ff00;
}

.sq-red {
    width: 52%;
    height: 52%;
    background-color: #ff0000;
}

.sq-blue.big {
    width: 304px;
    height: 304px;
}

.cal-title {
    margin: -9px 0 0 744px;
    font-size: 40.500px;
    line-height: 44px;
    color: #008000;
    white-space: nowrap;
}

.cal-line {
    margin: 0;
    padding-top: 24px;
    font-weight: bold;
    font-size: 19px;
    letter-spacing: 0.420px;
    line-height: 22px;
    white-space: nowrap;
}

.line-a { margin: 29px 0 0 576px; padding-top: 0; }
.line-b { margin-left: 516px; }
.line-c { margin-left: 363px; }
.line-d { margin-left: 306px; }

.cal-value {
    margin: 42px 0 0 817px;
    font-size: 40px;
    line-height: 46px;
    white-space: nowrap;
}

/* bottom bars */

.hscroll {
    height: 15px;
    flex-shrink: 0;
    display: flex;
    background-color: #c8c8c8;
}

.hscroll-left {
    width: 14px;
    position: relative;
    background-color: #f0f0f0;
}

.hscroll-left::after {
    content: "";
    position: absolute;
    left: 4px;
    top: 4px;
    width: 6px;
    height: 6px;
    border-left: 2px solid #444;
    border-bottom: 2px solid #444;
    transform: rotate(45deg);
}

.statusbar {
    height: 25px;
    margin-top: 2px;
    flex-shrink: 0;
    display: flex;
    align-items: stretch;
    background-color: #f0f0f0;
    font-size: 11px;
    color: #2b2b2b;
}

.status-cell {
    display: flex;
    align-items: center;
    gap: 6px;
    white-space: nowrap;
    border-right: 1px solid #d8d8d8;
}

.status-cell svg {
    width: 14px;
    height: 14px;
    flex-shrink: 0;
}

.cell-a {
    width: 156px;
    padding-left: 3px;
}

.cell-b {
    width: 156px;
    padding-left: 5px;
}

/* zoomed panel */

.zoom-frame {
    width: 442px;
    height: 1023px;
    margin: 10px 0 0 5px;
    flex-shrink: 0;
    display: flex;
    flex-direction: column;
    background-color: #ffffff;
    border: solid #000000;
    border-width: 3px 4px 6px 3px;
    overflow: hidden;
}

.zoom-canvas {
    flex: 1;
    min-height: 0;
    display: flex;
    flex-direction: column;
    padding-left: 6px;
    background: linear-gradient(#c8d1e3, #dde6f3);
}

.zoom-toolbar {
    height: 295px;
    flex-shrink: 0;
    padding: 47px 0 0 152px;
    background-color: #ffffff;
}

.pixel-arrow {
    width: 136px;
    height: 128px;
}

.zoom-strip {
    height: 8px;
    flex-shrink: 0;
    background-color: #d9d9d9;
}

.zoom-page {
    flex: 1;
    min-height: 0;
    display: flex;
    flex-direction: column;
    background-color: #ffffff;
    overflow: hidden;
}

.pixel-mark {
    display: block;
    width: 8px;
    height: 8px;
    background-color: #000000;
}

.coord-labels {
    margin-top: auto;
    margin-bottom: -2px;
    display: grid;
    grid-template-columns: 204px auto;
    font-weight: 700;
    font-size: 33px;
    line-height: 45px;
    white-space: nowrap;
}

.lbl-red {
    color: #ed1c24;
}

.lbl-orange {
    color: #ff7f27;
    letter-spacing: -0.700px;
}

.zoom-scroll {
    background-color: #f0f0f0;
    padding-left: 6px;
}

.zoom-scroll .hscroll-left {
    width: 11px;
}

.zoom-scroll .hscroll-thumb {
    width: 230px;
    background-color: #c8c8c8;
}

.cell-z1 { width: 155px; padding-left: 2px; }
.cell-z2 { width: 156px; padding-left: 5px; }
.cell-z3 { padding-left: 6px; border-right: 0; }

/* overlays */

.zoom-source {
    position: absolute;
    left: 2px;
    top: 192px;
    width: 57px;
    height: 155px;
    border: 3px solid #000000;
}

.annotations {
    position: absolute;
    left: 0;
    top: 0;
    width: 1582px;
    height: 1040px;
    pointer-events: none;
}
```
